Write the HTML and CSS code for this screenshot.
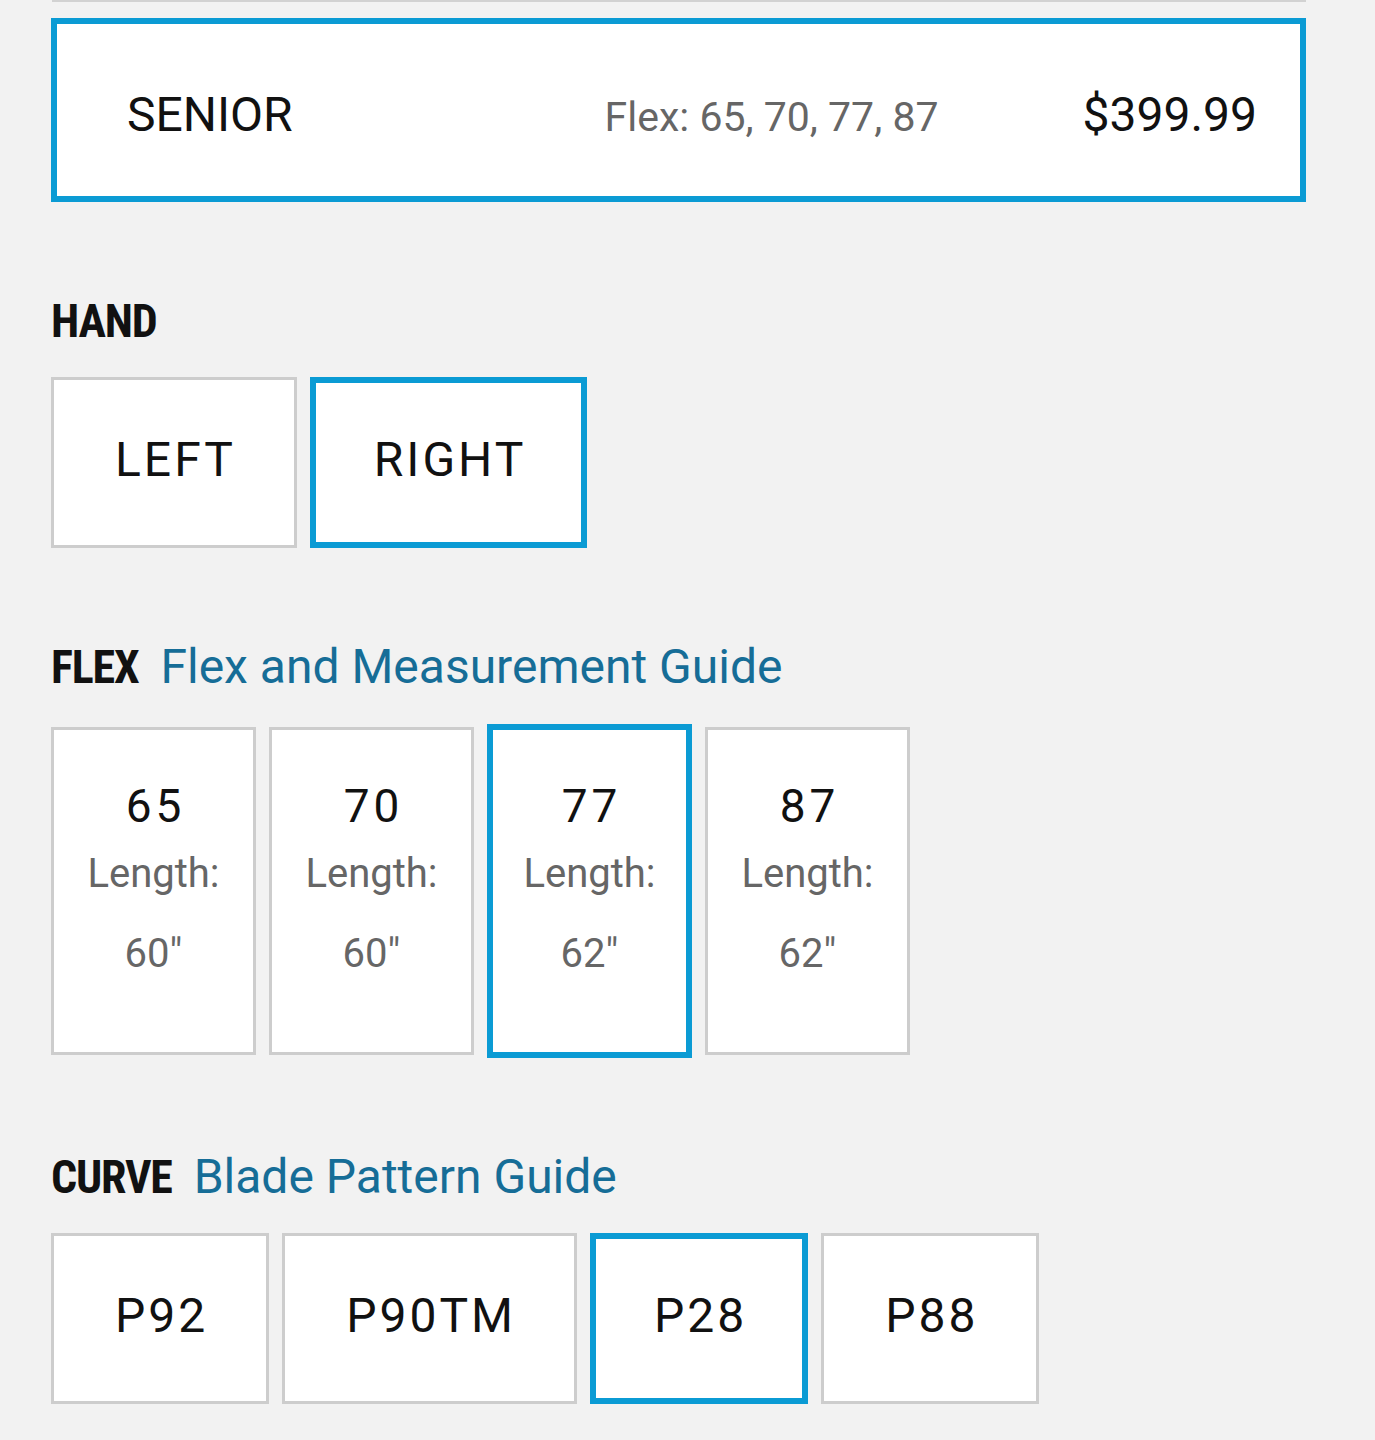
FILE: index.html
```html
<!DOCTYPE html>
<html lang="en">
<head>
<meta charset="utf-8">
<title>Stick options</title>
<link rel="stylesheet" href="styles.css">
</head>
<body>
<div class="page">
  <div class="rule"></div>

  <div class="size-card">
    <span class="size-name">SENIOR</span>
    <span class="size-flex">Flex: 65, 70, 77, 87</span>
    <span class="size-price">$399.99</span>
  </div>

  <section class="section">
    <div class="section-head">
      <h2 class="section-title">HAND</h2>
    </div>
    <div class="options">
      <button class="opt">LEFT</button>
      <button class="opt selected">RIGHT</button>
    </div>
  </section>

  <section class="section">
    <div class="section-head">
      <h2 class="section-title">FLEX</h2>
      <a class="guide" href="#">Flex and Measurement Guide</a>
    </div>
    <div class="options flex-options">
      <button class="flex-opt">
        <span class="flex-num">65</span>
        <span class="flex-len">Length:</span>
        <span class="flex-len">60"</span>
      </button>
      <button class="flex-opt">
        <span class="flex-num">70</span>
        <span class="flex-len">Length:</span>
        <span class="flex-len">60"</span>
      </button>
      <button class="flex-opt selected">
        <span class="flex-num">77</span>
        <span class="flex-len">Length:</span>
        <span class="flex-len">62"</span>
      </button>
      <button class="flex-opt">
        <span class="flex-num">87</span>
        <span class="flex-len">Length:</span>
        <span class="flex-len">62"</span>
      </button>
    </div>
  </section>

  <section class="section">
    <div class="section-head">
      <h2 class="section-title">CURVE</h2>
      <a class="guide" href="#">Blade Pattern Guide</a>
    </div>
    <div class="options curve-options">
      <button class="opt">P92</button>
      <button class="opt">P90TM</button>
      <button class="opt selected">P28</button>
      <button class="opt">P88</button>
    </div>
  </section>
</div>
</body>
</html>
```

FILE: styles.css
```css
* {
  box-sizing: border-box;
}

body {
  margin: 0;
  background: #f2f2f2;
  font-family: Roboto, "Liberation Sans", sans-serif;
  color: #111;
}

.page {
  margin-left: 51px;
  width: 1255px;
}

.rule {
  height: 2px;
  margin-left: 1px;
  background: #d2d2d2;
}

.size-card {
  margin-top: 16px;
  height: 184px;
  border: 6px solid #0b9bd4;
  background: #fff;
  display: flex;
  align-items: baseline;
  padding: 63px 43px 0 70px;
}

.size-name {
  flex: 1;
  font-size: 48px;
  line-height: 56px;
  color: #111;
}

.size-flex {
  font-size: 41px;
  line-height: 56px;
  color: #666;
  margin-right: 144px;
}

.size-price {
  font-size: 48px;
  line-height: 56px;
  color: #111;
}

.section {
  margin-top: 96px;
}

.section-head {
  display: flex;
  align-items: baseline;
  gap: 22px;
  height: 46px;
}

.section-title {
  margin: 0;
  font-family: Roboto, "Liberation Sans", sans-serif;
  font-stretch: 75%;
  font-weight: 700;
  font-size: 46px;
  line-height: 46px;
  letter-spacing: -1.2px;
  color: #111;
}

.guide {
  font-family: Roboto, "Liberation Sans", sans-serif;
  font-size: 48px;
  line-height: 46px;
  color: #166d97;
  text-decoration: none;
}

.options {
  display: flex;
  gap: 13px;
  margin-top: 33px;
}

.opt {
  height: 171px;
  padding: 0 58px 6px 61px;
  border: 3px solid #cdcdcd;
  background: #fff;
  font-family: Roboto, "Liberation Sans", sans-serif;
  font-size: 48px;
  letter-spacing: 3px;
  color: #111;
}

.opt.selected {
  padding: 0 55px 6px 58px;
  border: 6px solid #0b9bd4;
}

.flex-options {
  align-items: center;
  margin-top: 34px;
}

.flex-opt {
  width: 205px;
  height: 328px;
  padding: 0 0 10px;
  border: 3px solid #cdcdcd;
  background: #fff;
  display: flex;
  flex-direction: column;
  justify-content: center;
  align-items: center;
  font-family: Roboto, "Liberation Sans", sans-serif;
}

.flex-opt.selected {
  height: 334px;
  border: 6px solid #0b9bd4;
}

.flex-num {
  display: block;
  font-size: 46px;
  line-height: 56px;
  letter-spacing: 4px;
  padding-left: 4px;
  color: #111;
}

.flex-len {
  display: block;
  font-size: 40px;
  line-height: 80px;
  color: #666;
}

.curve-options {
  margin-top: 33px;
}
```
